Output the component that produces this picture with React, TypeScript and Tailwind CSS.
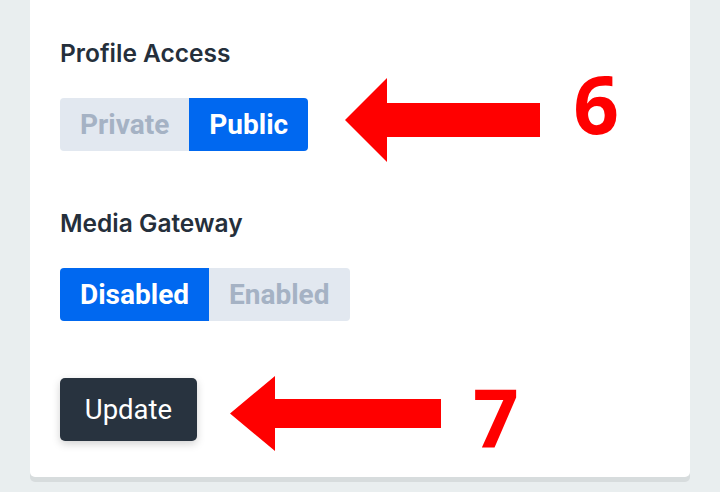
const Arrow = ({ w, h, head, shaft }: { w: number; h: number; head: number; shaft: number }) => {
  const top = (h - shaft) / 2;
  return (
    <svg width={w} height={h} viewBox={`0 0 ${w} ${h}`}>
      <polygon
        fill="#ff0000"
        points={`0,${h / 2} ${head},0 ${head},${top} ${w},${top} ${w},${top + shaft} ${head},${top + shaft} ${head},${h}`}
      />
    </svg>
  );
};

const Segmented = ({ options, active }: { options: string[]; active: number }) => (
  <div className="flex h-[53px] rounded-[4px] overflow-hidden">
    {options.map((label, i) => (
      <div
        key={label}
        className={`flex items-center px-[20px] font-bold text-[28px] ${
          i === active ? "bg-[#0068f0] text-white" : "bg-[#e2e8f0] text-[#a5b2c4]"
        }`}
        style={{ fontFamily: "Roboto, sans-serif" }}
      >
        {label}
      </div>
    ))}
  </div>
);

export default function App() {
  return (
    <div className="h-[492px] w-[720px] bg-[#e9eeef] px-[30px] overflow-hidden">
      <div
        className="bg-white rounded-b-[5px] pl-[30px] pt-[38px] pb-[21px] shadow-[0_5px_0_#d7dcdd]"
        style={{ fontFamily: "Inter, sans-serif" }}
      >
        <h2 className="text-[24.5px] font-semibold text-[#252f3b] leading-[30px]">
          Profile Access
        </h2>
        <div className="flex items-start mt-[10px]">
          <div className="mt-[20px]">
            <Segmented options={["Private", "Public"]} active={1} />
          </div>
          <div className="ml-[37px]">
            <Arrow w={195} h={84} head={42} shaft={34} />
          </div>
          <span
            className="ml-[33px] -mt-[15px] text-[80px] font-bold text-[#ff0000] leading-none"
            style={{ fontFamily: "'Open Sans', sans-serif" }}
          >
            6
          </span>
        </div>

        <h2 className="mt-[46px] text-[24.5px] font-semibold text-[#252f3b] leading-[30px]">
          Media Gateway
        </h2>
        <div className="mt-[30px] flex">
          <Segmented options={["Disabled", "Enabled"]} active={0} />
        </div>

        <div className="flex items-start mt-[55px]">
          <button
            className="mt-[2px] h-[63px] w-[137px] rounded-[5px] bg-[#28333f] text-white text-[27.5px] shadow-[0_3px_8px_rgba(0,0,0,0.18)]"
            style={{ fontFamily: "Roboto, sans-serif" }}
          >
            Update
          </button>
          <div className="ml-[33px]">
            <Arrow w={211} h={75} head={45} shaft={29} />
          </div>
          <span
            className="ml-[32px] text-[80px] font-bold text-[#ff0000] leading-none"
            style={{ fontFamily: "'Open Sans', sans-serif" }}
          >
            7
          </span>
        </div>
      </div>
    </div>
  );
}
